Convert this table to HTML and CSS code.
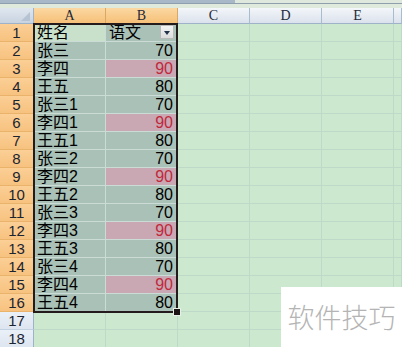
FILE: index.html
```html
<!DOCTYPE HTML>
<html lang="zh-CN">
  <head>
    <title>成绩表</title>
    <meta charset="utf-8">
    <link rel="stylesheet" href="styles.css">
  </head>
  <body>

  <div id="topbar">
    <div class="strip"><span class="formula"></span></div>
    <div class="rule"></div>
    <div class="gap"></div>
  </div>

  <div id="sheet"></div>

  <div id="stamp">软件技巧</div>

  <script>
    // data for A1:B16
    var rows = [
      ['姓名', '语文'],
      ['张三', 70], ['李四', 90], ['王五', 80],
      ['张三1', 70], ['李四1', 90], ['王五1', 80],
      ['张三2', 70], ['李四2', 90], ['王五2', 80],
      ['张三3', 70], ['李四3', 90], ['王五3', 80],
      ['张三4', 70], ['李四4', 90], ['王五4', 80]
    ];
    var cols = ['A', 'B', 'C', 'D', 'E'];
    var sheet = document.getElementById('sheet');
    var html = '<div class="corner"><span></span></div>';

    for (var c = 0; c < cols.length; c++) {
      html += '<div class="colhead' + (c < 2 ? ' on' : '') + '">' + cols[c] + '</div>';
    }
    html += '<div class="colhead"></div>';

    for (var r = 0; r < 18; r++) {
      var inData = r < rows.length;
      html += '<div class="rowhead' + (inData ? ' on' : '') + '">' + (r + 1) + '</div>';
      for (var c = 0; c < 6; c++) {
        var cls = 'cell';
        var txt = '';
        if (inData && c < 2) {
          cls += ' sel';
          txt = rows[r][c];
          if (r === 0 && c === 0) cls += ' active';
          if (c === 1 && r > 0) cls += ' num';
          if (c === 1 && rows[r][1] === 90) cls += ' hot';
          if (r === 0 && c === 1) txt += '<span class="drop"></span>';
        }
        html += '<div class="' + cls + '">' + txt + '</div>';
      }
    }
    html += '<div class="range"><span class="handle"></span></div>';
    sheet.innerHTML = html;
  </script>

  </body>
</html>
```

FILE: styles.css
```css
html {
  height: 100%;
}
body {
  margin: 0;
  padding: 0;
  width: 402px;
  height: 347px;
  overflow: hidden;
  position: relative;
  background: #cce8cf;
  font-family: "Liberation Sans", "Noto Sans CJK SC", sans-serif;
}

/* formula bar edge */
#topbar .strip {
  height: 3px;
  background: #dfe8dc;
}
#topbar .formula {
  display: block;
  width: 235px;
  height: 3px;
  background: #a9b8c9;
}
#topbar .rule {
  height: 1px;
  background: #8f9fae;
}
#topbar .gap {
  height: 4px;
  background: #dfeadc;
}

#sheet {
  position: relative;
  display: grid;
  grid-template-columns: 34px repeat(5, 72px) 1fr;
  grid-template-rows: 16px;
  grid-auto-rows: 18px;
}

.corner {
  position: relative;
  background: linear-gradient(#dfe6ef, #c9d4e1);
  border-right: 1px solid #9eb3c9;
  border-bottom: 1px solid #9eb3c9;
}
.corner span {
  position: absolute;
  right: 3px;
  bottom: 2px;
  width: 0;
  height: 0;
  border-left: 9px solid transparent;
  border-bottom: 9px solid #b5c3d3;
}

.colhead {
  background: linear-gradient(#f3f6fa, #dbe2ec);
  border-right: 1px solid #a8bbcf;
  border-bottom: 1px solid #9eb3c9;
  font: 14px "Liberation Serif", serif;
  line-height: 16px;
  text-align: center;
  color: #1e2a3a;
}
.colhead.on {
  background: linear-gradient(#fbd8a2, #f6c078);
  border-right-color: #d9a866;
}

.rowhead {
  background: linear-gradient(#eaf0f8, #dde5f0);
  border-right: 1px solid #9eb3c9;
  border-bottom: 1px solid #c4d1e0;
  font-size: 15px;
  line-height: 18px;
  text-align: center;
  color: #1c2430;
}
.rowhead.on {
  background: linear-gradient(#fbcf96, #f7c27f);
  border-bottom-color: #e9b36c;
}

.cell {
  position: relative;
  border-right: 1px solid #bfd9c9;
  border-bottom: 1px solid #bfd9c9;
  font-size: 16px;
  line-height: 18px;
  padding: 0 3px;
  white-space: nowrap;
  overflow: hidden;
  color: #000;
}
.cell.sel {
  background: #a9c1b6;
  border-color: #cbdcd6;
}
.cell.active {
  background: #c9e0cb;
}
.cell.num {
  text-align: right;
  padding-right: 4px;
}
.cell.hot {
  background: #c9a8b3;
  color: #c0283d;
}

.drop {
  position: absolute;
  right: 3px;
  top: 1px;
  width: 14px;
  height: 14px;
  box-sizing: border-box;
  background: linear-gradient(#f4f4f4, #dcdcdc);
  border: 1px solid #b9b9b9;
}
.drop:after {
  content: "";
  position: absolute;
  left: 3px;
  top: 5px;
  border-left: 3.5px solid transparent;
  border-right: 3.5px solid transparent;
  border-top: 4px solid #23324a;
}

/* selected range A1:B16 */
.range {
  position: absolute;
  left: 33px;
  top: 15px;
  width: 145px;
  height: 290px;
  box-sizing: border-box;
  border: 2px solid #241b1c;
  pointer-events: none;
}
.handle {
  position: absolute;
  right: -5px;
  bottom: -5px;
  width: 6px;
  height: 6px;
  background: #1a1414;
  border: 1px solid #e8efe8;
}

#stamp {
  position: absolute;
  left: 281px;
  top: 287px;
  width: 121px;
  height: 60px;
  background: #fff;
  color: #b4b4b4;
  font: 300 27px "Noto Sans CJK SC", sans-serif;
  line-height: 60px;
  text-align: center;
}
```
